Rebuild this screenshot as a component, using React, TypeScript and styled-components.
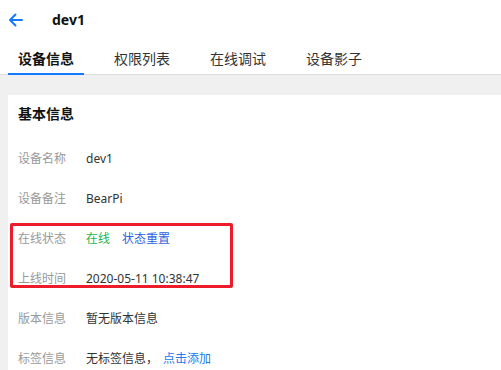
import React from 'react'
import styled, { createGlobalStyle } from 'styled-components'

const GlobalStyle = createGlobalStyle`
    html, body {
        margin: 0;
        padding: 0;
        background: #fff;
    }
    body {
        font-family: "Noto Sans", "Noto Sans CJK SC", sans-serif;
        color: #333;
    }
`

const Page = styled.div`
    width: 501px;
    height: 370px;
    overflow: hidden;
    display: flex;
    flex-direction: column;
`

const Header = styled.div`
    flex-shrink: 0;
    height: 40px;
    display: flex;
    align-items: center;
    padding-left: 8px;
`

const BackButton = styled.button`
    border: 0;
    padding: 0;
    background: none;
    display: flex;
    width: 15px;
    height: 14px;
    color: #1677ff;
    cursor: pointer;
`

const DeviceName = styled.h1`
    margin: 0 0 0 29px;
    font-size: 14px;
    font-weight: 700;
    line-height: 20px;
    color: #111;
`

const TabBar = styled.div`
    flex-shrink: 0;
    display: flex;
    gap: 20px;
    padding-left: 8px;
    border-bottom: 1px solid #dcdcdc;
`

const Tab = styled.div<{ $active?: boolean }>`
    padding: 8px 10px 3px;
    margin-bottom: -1px;
    font-size: 14px;
    line-height: 22px;
    font-weight: ${({ $active }) => ($active ? 700 : 400)};
    color: ${({ $active }) => ($active ? '#111' : '#333')};
    border-bottom: 2px solid ${({ $active }) => ($active ? '#1677ff' : 'transparent')};
`

const Body = styled.div`
    flex: 1;
    min-height: 0;
    background: #f0f0f0;
    padding: 20px 0 0 8px;
`

const Card = styled.section`
    background: #fff;
    min-height: 100%;
`

const CardTitle = styled.h2`
    margin: 0 0 5px;
    padding: 0 10px;
    height: 38px;
    line-height: 38px;
    font-size: 14px;
    font-weight: 700;
    color: #111;
`

const Highlight = styled.div`
    position: relative;
    &::after {
        content: '';
        position: absolute;
        left: 2px;
        top: 5px;
        width: 217px;
        height: 59px;
        border: 3px solid #ec1c2a;
        border-radius: 2px;
        pointer-events: none;
    }
`

const Row = styled.div`
    height: 40px;
    display: flex;
    align-items: center;
    padding: 0 10px;
    font-size: 12px;
`

const Label = styled.span`
    width: 48px;
    margin-right: 20px;
    color: #999;
    white-space: nowrap;
`

const Value = styled.span`
    color: #333;
    white-space: nowrap;
`

const Status = styled.span`
    color: #1fb14f;
    margin-right: 12px;
`

const Link = styled.a<{ $dark?: boolean; $gap?: boolean }>`
    margin-left: ${({ $gap }) => ($gap ? '5px' : '0')};
    color: ${({ $dark }) => ($dark ? '#2f5fe0' : '#1a7af0')};
    text-decoration: none;
    cursor: pointer;
`

const ArrowIcon = () => (
    <svg width="15" height="14" viewBox="0 0 15 14" fill="none">
        <path d="M14 7H2M7.5 1.5L2 7l5.5 5.5" stroke="currentColor" strokeWidth="2" strokeLinecap="round" strokeLinejoin="round" />
    </svg>
)

const tabs = ['设备信息', '权限列表', '在线调试', '设备影子']

export default function App() {
    return (
        <Page>
            <GlobalStyle />
            <Header>
                <BackButton aria-label="返回">
                    <ArrowIcon />
                </BackButton>
                <DeviceName>dev1</DeviceName>
            </Header>
            <TabBar>
                {tabs.map((tab, i) => (
                    <Tab key={tab} $active={i === 0}>
                        {tab}
                    </Tab>
                ))}
            </TabBar>
            <Body>
                <Card>
                    <CardTitle>基本信息</CardTitle>
                    <Row>
                        <Label>设备名称</Label>
                        <Value>dev1</Value>
                    </Row>
                    <Row>
                        <Label>设备备注</Label>
                        <Value>BearPi</Value>
                    </Row>
                    <Highlight>
                        <Row>
                            <Label>在线状态</Label>
                            <Status>在线</Status>
                            <Link $dark>状态重置</Link>
                        </Row>
                        <Row>
                            <Label>上线时间</Label>
                            <Value>2020-05-11 10:38:47</Value>
                        </Row>
                    </Highlight>
                    <Row>
                        <Label>版本信息</Label>
                        <Value>暂无版本信息</Value>
                    </Row>
                    <Row>
                        <Label>标签信息</Label>
                        <Value>无标签信息，</Value>
                        <Link $gap>点击添加</Link>
                    </Row>
                </Card>
            </Body>
        </Page>
    )
}
